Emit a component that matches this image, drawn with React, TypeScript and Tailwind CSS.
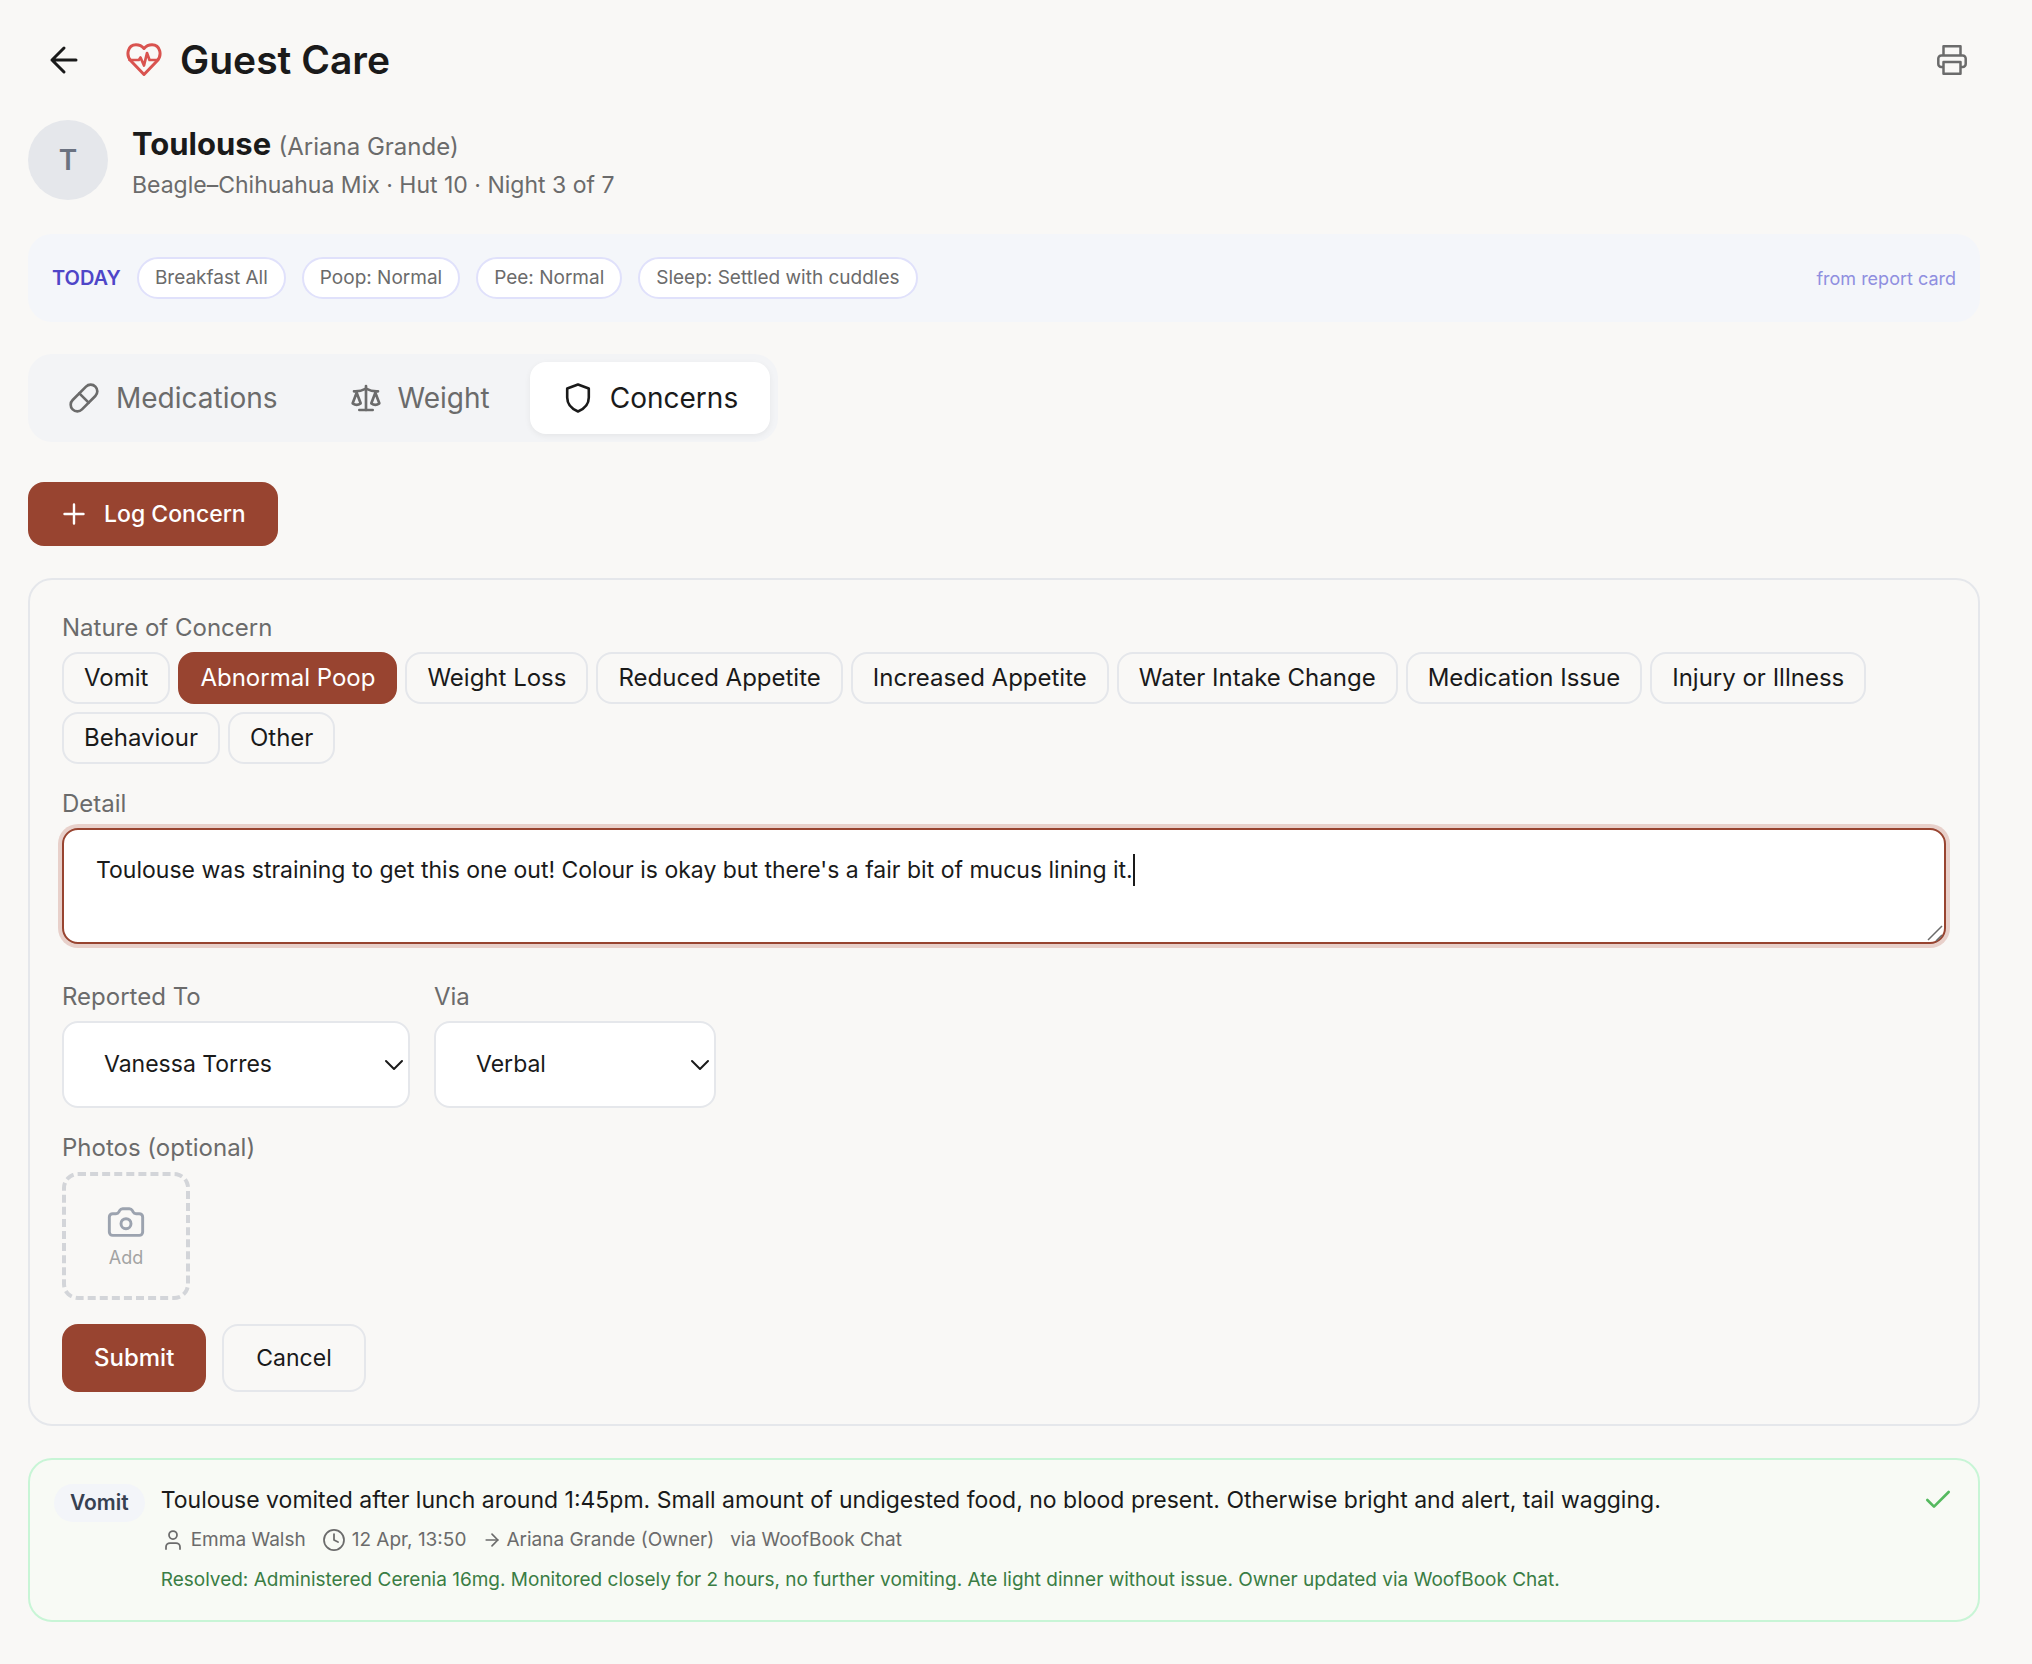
import { useLayoutEffect, useState } from "react";
import type { ReactNode } from "react";
import { ArrowRight, Camera, Check, ChevronDown, Clock, Pill, Scale, User } from "lucide-react";

const todayItems = ["Breakfast All", "Poop: Normal", "Pee: Normal", "Sleep: Settled with cuddles"];

const concernTypes = [
  "Vomit",
  "Abnormal Poop",
  "Weight Loss",
  "Reduced Appetite",
  "Increased Appetite",
  "Water Intake Change",
  "Medication Issue",
  "Injury or Illness",
  "Behaviour",
  "Other",
];

const labelClass = "block text-[24px] leading-8 text-[#6b6b6b]";

function BackIcon() {
  return (
    <svg width="32" height="32" viewBox="0 0 32 32" fill="none" stroke="currentColor" strokeWidth="3" strokeLinecap="round" strokeLinejoin="round">
      <path d="M28 16H4M16 4 4 16l12 12" />
    </svg>
  );
}

function HeartPulseIcon() {
  return (
    <svg width="36" height="36" viewBox="0 0 36 36" fill="none" stroke="currentColor" strokeWidth="3" strokeLinecap="round" strokeLinejoin="round">
      <path d="M18 32.5 5 19C-.5 13 1.8 2.7 10 2.7c3.4 0 6 1.4 8 3.8 2-2.4 4.6-3.8 8-3.8 8.2 0 10.5 10.3 5 16.3Z" />
      <path d="M3.5 18h9.3l1.7-2.5 3.5 8 3-12.500 2.500 7 1 0H32" strokeWidth="2.7" />
    </svg>
  );
}

function PrinterIcon() {
  return (
    <svg width="32" height="32" viewBox="0 0 32 32" fill="none" stroke="currentColor" strokeWidth="2.5" strokeLinejoin="round">
      <path d="M7.500 12V2.200h17V12" />
      <path d="M7.500 23H5.300a3 3 0 0 1-3-3V14.500A3 3 0 0 1 5.300 11.500h21.400a3 3 0 0 1 3 3V20a3 3 0 0 1-3 3H24.500" />
      <path d="M7.500 18h17v11.800h-17z" />
    </svg>
  );
}

function ShieldIcon() {
  return (
    <svg width="32" height="32" viewBox="0 0 32 32" fill="none" stroke="currentColor" strokeWidth="2.6" strokeLinejoin="round">
      <path d="M16 2.500 26.800 6.500v9c0 6.500-4.800 11.500-10.800 14-6-2.500-10.800-7.500-10.800-14v-9Z" />
    </svg>
  );
}

function PlusIcon() {
  return (
    <svg width="28" height="28" viewBox="0 0 28 28" fill="none" stroke="currentColor" strokeWidth="2.4" strokeLinecap="round">
      <path d="M14 4.500v19M4.500 14h19" />
    </svg>
  );
}

function Tab({ icon, label, active = false }: { icon: ReactNode; label: string; active?: boolean }) {
  return (
    <button
      type="button"
      role="tab"
      aria-selected={active}
      className={`flex h-[72px] items-center gap-4 rounded-2xl px-8 text-[28px] ${
        active ? "bg-white text-[#1a1a1a] shadow-[0_2px_6px_rgba(0,0,0,0.06)]" : "text-[#6b6b6b]"
      }`}
    >
      {icon}
      {label}
    </button>
  );
}

function SelectField({ id, label, options, width }: { id: string; label: string; options: string[]; width: string }) {
  return (
    <div>
      <label htmlFor={id} className={labelClass}>
        {label}
      </label>
      <div className={`relative mt-2 ${width}`}>
        <select
          id={id}
          className="block h-[87px] w-full appearance-none rounded-2xl border-2 border-[#e5e7eb] bg-white px-10 text-[23px] text-[#1a1a1a] outline-none"
        >
          {options.map((option) => (
            <option key={option}>{option}</option>
          ))}
        </select>
        <ChevronDown size={32} strokeWidth={1.5} className="pointer-events-none absolute top-7 right-0 text-[#1a1a1a]" />
      </div>
    </div>
  );
}

function DetailField() {
  const [detail, setDetail] = useState(
    "Toulouse was straining to get this one out! Colour is okay but there's a fair bit of mucus lining it."
  );
  const [textWidth, setTextWidth] = useState(0);

  useLayoutEffect(() => {
    const ctx = document.createElement("canvas").getContext("2d");
    if (!ctx) return;
    ctx.font = "23px Inter";
    setTextWidth(Math.round(ctx.measureText(detail).width));
  }, [detail]);

  return (
    <div className="mt-6">
      <label htmlFor="detail" className={labelClass}>
        Detail
      </label>
      <div className="relative mt-2">
        <textarea
          id="detail"
          value={detail}
          onChange={(e) => setDetail(e.target.value)}
          className="block h-[116px] w-full resize-none rounded-2xl border-2 border-[#984430] bg-white px-8 py-6 text-[23px] leading-8 text-[#1a1a1a] caret-transparent ring-4 ring-[#e8d0ca] outline-none"
        />
        <div aria-hidden className="pointer-events-none absolute top-[26px] left-[34px]">
          <div className="h-8 w-0.5 bg-[#1a1a1a]" style={{ marginLeft: textWidth }} />
        </div>
        {/* Resize grip */}
        <svg
          width="20"
          height="20"
          viewBox="0 0 20 20"
          fill="none"
          stroke="#6b6b6b"
          strokeWidth="1.5"
          className="pointer-events-none absolute right-0 bottom-0"
        >
          <path d="M2 16 16 2M10 17l6-6" />
        </svg>
      </div>
    </div>
  );
}

function ConcernForm() {
  const [selected, setSelected] = useState("Abnormal Poop");

  return (
    <form className="mt-8 rounded-3xl border-2 border-[#e5e7eb] p-8" onSubmit={(e) => e.preventDefault()}>
      <fieldset>
        <legend className={labelClass}>Nature of Concern</legend>
        <div className="mt-2 flex flex-wrap gap-2">
          {concernTypes.map((type) => (
            <button
              key={type}
              type="button"
              aria-pressed={type === selected}
              onClick={() => setSelected(type)}
              className={`h-[52px] rounded-2xl border-2 px-5 text-[24px] ${
                type === selected ? "border-[#984430] bg-[#984430] text-white" : "border-[#e5e7eb] text-[#1a1a1a]"
              }`}
            >
              {type}
            </button>
          ))}
        </div>
      </fieldset>

      <DetailField />

      <div className="mt-[37px] flex gap-6">
        <SelectField id="reported-to" label="Reported To" options={["Vanessa Torres", "Emma Walsh"]} width="w-[348px]" />
        <SelectField id="via" label="Via" options={["Verbal", "WoofBook Chat"]} width="w-[282px]" />
      </div>

      <div className="mt-6">
        <p className={labelClass}>Photos (optional)</p>
        <button
          type="button"
          className="mt-2 flex h-32 w-32 flex-col items-center justify-center gap-1 rounded-2xl border-4 border-dashed border-[#d3d5d9] text-[#9ca3af]"
        >
          <Camera size={40} strokeWidth={1.75} />
          <span className="text-[18px] leading-6 text-[#a3a3a3]">Add</span>
        </button>
      </div>

      <div className="mt-6 flex gap-4">
        <button type="submit" className="h-[68px] rounded-2xl bg-[#984430] px-8 text-[24px] font-medium text-white">
          Submit
        </button>
        <button type="button" className="h-[68px] rounded-2xl border-2 border-[#e5e7eb] px-8 text-[23px] text-[#1a1a1a]">
          Cancel
        </button>
      </div>
    </form>
  );
}

function ResolvedConcern() {
  return (
    <article className="mt-8 flex items-start gap-4 rounded-3xl border-2 border-[#c8f5d6] bg-[#f8faf5] p-6">
      <span className="rounded-full bg-[#f3f5f9] px-4 text-[21px] leading-[38px] font-semibold text-[#374151]">Vomit</span>
      <div className="flex-1">
        <p className="text-[23px] leading-8 text-[#1a1a1a]">
          Toulouse vomited after lunch around 1:45pm. Small amount of undigested food, no blood present. Otherwise bright and alert, tail wagging.
        </p>
        <div className="mt-2 flex items-center gap-4 text-[19px] leading-8 text-[#6b6b6b]">
          <span className="flex items-center gap-1.5">
            <User size={24} strokeWidth={1.75} />
            Emma Walsh
          </span>
          <span className="flex items-center gap-1.5">
            <Clock size={24} strokeWidth={1.75} />
            12 Apr, 13:50
          </span>
          <span className="flex items-center gap-1">
            <ArrowRight size={20} strokeWidth={2} />
            Ariana Grande (Owner)
          </span>
          <span>via WoofBook Chat</span>
        </div>
        <p className="mt-2 text-[19px] leading-8 text-[#3a7d44]">
          Resolved: Administered Cerenia 16mg. Monitored closely for 2 hours, no further vomiting. Ate light dinner without issue. Owner updated via WoofBook Chat.
        </p>
      </div>
      <Check size={32} className="text-[#55b95f]" />
    </article>
  );
}

export default function App() {
  return (
    <main className="min-h-screen bg-[#f9f8f6] pt-7 pr-[52px] pb-[42px] pl-7 font-['Inter',sans-serif] text-[#1a1a1a]">
      <header className="flex h-16 items-center justify-between pr-3 pl-5">
        <div className="flex items-center">
          <button type="button" aria-label="Back">
            <BackIcon />
          </button>
          <h1 className="ml-[46px] flex items-center gap-[18px] text-[39px] font-semibold">
            <span className="text-[#d9534f]">
              <HeartPulseIcon />
            </span>
            Guest Care
          </h1>
        </div>
        <button type="button" aria-label="Print" className="text-[#6b6b6b]">
          <PrinterIcon />
        </button>
      </header>

      <section className="mt-[26px] flex h-[84px] items-center gap-6">
        <div className="flex h-20 w-20 items-center justify-center rounded-full bg-[#e5e7eb] text-[28px] font-semibold text-[#6b7280]">T</div>
        <div className="pt-1.5">
          <h2 className="text-[31px] leading-10 font-bold">
            Toulouse <span className="text-[24px] font-normal text-[#6b6b6b]">(Ariana Grande)</span>
          </h2>
          <p className="text-[23px] leading-9 text-[#6b6b6b]">Beagle–Chihuahua Mix · Hut 10 · Night 3 of 7</p>
        </div>
      </section>

      <section className="mt-8 flex h-[88px] items-center gap-4 rounded-3xl bg-[#f4f6fa] px-6">
        <span className="text-[20px] font-semibold text-[#4f46c8]">TODAY</span>
        {todayItems.map((item) => (
          <span key={item} className="rounded-full border-2 border-[#e0e1fb] bg-white px-4 text-[19px] leading-[38px] text-[#6b6b6b]">
            {item}
          </span>
        ))}
        <span className="ml-auto text-[18px] text-[#8f8fe0]">from report card</span>
      </section>

      <div role="tablist" className="mt-8 flex w-fit gap-2 rounded-3xl bg-[#f3f4f6] p-2">
        <Tab icon={<Pill size={32} strokeWidth={2} />} label="Medications" />
        <Tab icon={<Scale size={32} strokeWidth={2} />} label="Weight" />
        <Tab icon={<ShieldIcon />} label="Concerns" active />
      </div>

      <button type="button" className="mt-10 flex h-16 items-center gap-4 rounded-2xl bg-[#984430] px-8 text-[23px] font-medium text-white">
        <PlusIcon />
        Log Concern
      </button>

      <ConcernForm />
      <ResolvedConcern />
    </main>
  );
}
